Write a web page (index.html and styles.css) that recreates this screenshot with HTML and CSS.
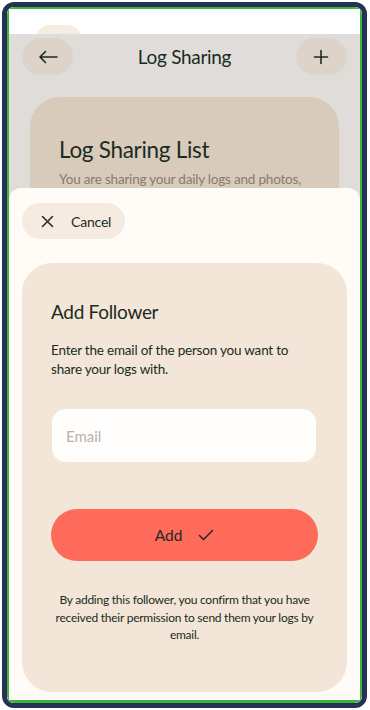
FILE: index.html
```html
<!DOCTYPE html>
<html lang="en">
<head>
<meta charset="utf-8">
<title>Log Sharing</title>
<link rel="stylesheet" href="styles.css">
</head>
<body>
<div class="frame">
  <div class="screen">
    <div class="status"><span class="ghost"></span></div>
    <div class="backdrop">
      <header class="topbar">
        <button class="round-btn" aria-label="Back">
          <svg width="20" height="14" viewBox="0 0 20 14"><path d="M19 7H2M7.5 1.5L2 7l5.5 5.5" fill="none" stroke="#1b2a22" stroke-width="1.6" stroke-linecap="round" stroke-linejoin="round"/></svg>
        </button>
        <h1 class="title">Log Sharing</h1>
        <button class="round-btn" aria-label="Add">
          <svg width="16" height="16" viewBox="0 0 16 16"><path d="M8 1.5v13M1.5 8h13" fill="none" stroke="#1b2a22" stroke-width="1.6" stroke-linecap="round"/></svg>
        </button>
      </header>
      <section class="list-card">
        <h2 class="list-title">Log Sharing List</h2>
        <p class="list-sub">You are sharing your daily logs and photos, with the people below.</p>
      </section>
    </div>
    <div class="sheet">
      <button class="cancel">
        <svg width="13" height="13" viewBox="0 0 13 13"><path d="M1.5 1.5l10 10M11.5 1.5l-10 10" fill="none" stroke="#1b2a22" stroke-width="1.5" stroke-linecap="round"/></svg>
        <span>Cancel</span>
      </button>
      <div class="form-card">
        <h3 class="form-title">Add Follower</h3>
        <p class="form-desc">Enter the email of the person you want to share your logs with.</p>
        <div class="input">Email</div>
        <button class="add-btn">
          <span>Add</span>
          <svg width="16" height="12" viewBox="0 0 16 12"><path d="M1.5 6.5l4 4L14.5 1.5" fill="none" stroke="#1b2a22" stroke-width="1.5" stroke-linecap="round" stroke-linejoin="round"/></svg>
        </button>
        <p class="note">By adding this follower, you confirm that you have received their permission to send them your logs by email.</p>
      </div>
    </div>
  </div>
</div>
</body>
</html>
```

FILE: styles.css
```css
* { box-sizing: border-box; }
html, body { margin: 0; padding: 0; background: #ffffff; }
body {
  font-family: Lato, "Noto Sans", "Liberation Sans", sans-serif;
  color: #1a2b21;
}
.frame {
  margin: 2px 3px 2px 2px;
  height: 706px;
  border: 5px solid #253256;
  border-radius: 12px;
  overflow: hidden;
}
.screen {
  height: 100%;
  border: 2px solid #3cb53a;
  border-bottom-width: 3px;
  position: relative;
  overflow: hidden;
  background: #ffffff;
  display: flex;
  flex-direction: column;
}
.status {
  height: 25px;
  flex: none;
  position: relative;
  overflow: hidden;
}
.ghost {
  position: absolute;
  left: 26px;
  top: 16px;
  width: 47px;
  height: 30px;
  border-radius: 18px;
  background: #f6ede2;
}
.backdrop {
  flex: 1;
  background: #dfdcd9;
  padding: 4px 13px 0;
}
.topbar {
  display: flex;
  align-items: center;
  justify-content: space-between;
  height: 37px;
}
.round-btn {
  width: 51px;
  height: 37px;
  border: 0;
  border-radius: 19px;
  background: #ddd3c8;
  display: flex;
  align-items: center;
  justify-content: center;
  padding: 0;
}
.title {
  margin: 0;
  font-size: 19px;
  font-weight: 400;
  letter-spacing: -0.3px;
}
.list-card {
  margin: 22px 8px 0;
  height: 200px;
  background: #d9cbbc;
  border-radius: 30px;
  padding: 39px 29px 0;
}
.list-title {
  margin: 0;
  font-size: 22.5px;
  font-weight: 400;
  line-height: 28px;
  letter-spacing: -0.3px;
}
.list-sub {
  margin: 6px 0 0;
  font-size: 13.5px;
  line-height: 19px;
  letter-spacing: -0.2px;
  color: #857b70;
}
.sheet {
  position: absolute;
  left: 0;
  right: 0;
  top: 179px;
  bottom: 0;
  background: #fffcf8;
  border-radius: 12px 12px 0 0;
  padding: 15px 13px 0;
}
.cancel {
  display: flex;
  align-items: center;
  gap: 17px;
  height: 36px;
  width: 103px;
  border: 0;
  border-radius: 18px;
  background: #f5ebe0;
  padding: 0 0 0 19px;
  font-family: inherit;
  font-size: 14px;
  letter-spacing: -0.2px;
  font-weight: 400;
  color: #1a2b21;
}
.form-card {
  margin-top: 24px;
  height: 429px;
  background: #f3e6d8;
  border-radius: 30px;
  padding: 37px 29px 0;
}
.form-title {
  margin: 0;
  font-size: 19px;
  font-weight: 400;
  line-height: 24px;
  letter-spacing: -0.3px;
}
.form-desc {
  margin: 17px 0 0;
  font-size: 13.5px;
  line-height: 19px;
  letter-spacing: -0.2px;
}
.input {
  margin: 30px 2px 0 1px;
  height: 53px;
  background: #fffefc;
  border-radius: 14px;
  padding-left: 14px;
  display: flex;
  align-items: center;
  font-size: 15px;
  color: #b7b2ac;
}
.add-btn {
  margin-top: 47px;
  width: 100%;
  height: 52px;
  border: 0;
  border-radius: 26px;
  background: #fe6b5b;
  display: flex;
  align-items: center;
  justify-content: center;
  gap: 16px;
  font-family: inherit;
  font-size: 15.5px;
  font-weight: 400;
  color: #1a2b21;
  padding: 0;
}
.note {
  margin: 30px 0 0;
  font-size: 12px;
  line-height: 17.5px;
  letter-spacing: -0.25px;
  text-align: center;
}
```
